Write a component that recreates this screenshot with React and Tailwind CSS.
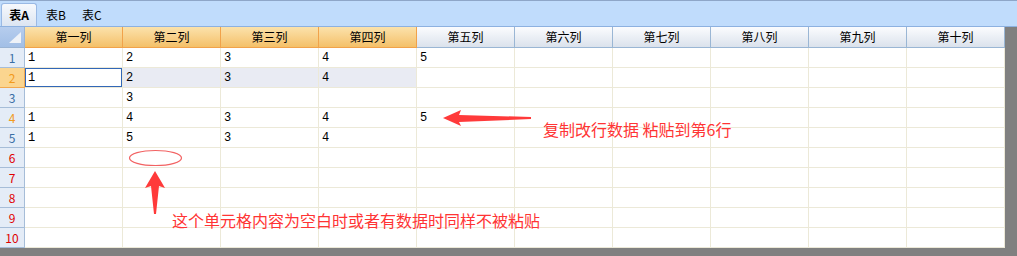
import React from "react";

const cols = ["第一列", "第二列", "第三列", "第四列", "第五列", "第六列", "第七列", "第八列", "第九列", "第十列"];

const rows = [
  ["1", "2", "3", "4", "5"],
  ["1", "2", "3", "4"],
  ["", "3"],
  ["1", "4", "3", "4", "5"],
  ["1", "5", "3", "4"],
  [],
  [],
  [],
  [],
  [],
];

const rowNumColor = (i) => {
  if (i === 1 || i === 3) return "text-[#f29a1c]";
  if (i >= 5) return "text-[#e00000]";
  return "text-[#3a6ea5]";
};

export default function App() {
  return (
    <div className="relative w-[1017px] h-[256px] overflow-hidden bg-[#808080] text-[12px] text-black" style={{ fontFamily: '"Noto Sans CJK SC", sans-serif' }}>
      {/* tab bar */}
      <div className="flex items-end h-[27px] bg-[#c0dcfc] border-t border-[#8ea6c8] border-b border-b-[#8db1e0] pl-[1px]">
        <div className="flex items-center justify-center whitespace-nowrap h-[23px] w-[36px] font-bold bg-gradient-to-b from-[#f7f9fd] to-[#dce5f2] border border-b-0 border-[#9ab9e4] rounded-t-[3px]">
          表A
        </div>
        <div className="flex items-center whitespace-nowrap h-[23px] pl-[9px] pr-[8px]">表B</div>
        <div className="flex items-center whitespace-nowrap h-[23px] px-[8px]">表C</div>
      </div>

      <div className="w-[1005px] bg-white">
        {/* header row */}
        <div className="flex h-[21px]">
          <div className="relative w-[25px] h-full bg-gradient-to-b from-[#b6cdee] to-[#a2bfe6] border-r border-b border-[#9ab4d4]">
            <svg className="absolute left-0 top-0" width="24" height="20" viewBox="0 0 24 20">
              <polygon points="9,16 21,16 21,5" fill="#eef2f8" />
            </svg>
          </div>
          {cols.map((c, i) =>
            i < 4 ? (
              <div key={c} className="flex items-center justify-center w-[98px] h-full bg-gradient-to-b from-[#fbe2ab] to-[#f4c068] border-r border-b border-[#f1a24a]">
                {c}
              </div>
            ) : (
              <div key={c} className="flex items-center justify-center w-[98px] h-full bg-gradient-to-b from-[#fbfcfe] to-[#dbe2ec] border-r border-b border-[#9ab6d4]">
                {c}
              </div>
            )
          )}
        </div>

        {/* data rows */}
        {rows.map((r, i) => (
          <div key={i} className="flex h-[20px]">
            <div
              className={
                "flex items-center justify-center w-[25px] h-full border-r border-b " +
                (i === 1 ? "bg-[#fbd58f] border-[#f2a94f] " : "bg-[#e4ecf7] border-[#a6bdd8] ") +
                rowNumColor(i)
              }
            >
              {i + 1}
            </div>
            {cols.map((c, j) => {
              const v = r[j] || "";
              const selected = i === 1 && j === 0;
              const shade = i === 1 && j > 0 && j < 4;
              return (
                <div
                  key={c}
                  className={
                    "flex items-center w-[98px] h-full border-r border-b border-[#ece9d8] " +
                    (selected ? "shadow-[inset_0_0_0_1px_#3267b7] " : "") +
                    (shade ? "bg-[#e9ebf3]" : "bg-white")
                  }
                >
                  <span className="pl-[3px]" style={{ fontFamily: '"Liberation Mono", monospace' }}>{v}</span>
                </div>
              );
            })}
          </div>
        ))}
      </div>

      {/* annotations */}
      <svg className="absolute left-0 top-0 pointer-events-none" width="1017" height="256" viewBox="0 0 1017 256">
        <ellipse cx="155.5" cy="158" rx="26" ry="7.5" fill="none" stroke="#f26262" strokeWidth="1.2" />
        <polygon points="443,118 461,110 459,115 531,117 531,119 459,122 461,126" fill="#ff3a3a" />
        <polygon points="155,171 165,188 159,186 156,214 154,214 151,186 145,188" fill="#ff3a3a" />
      </svg>
      <div className="absolute left-[543px] top-[119px] text-[16px] leading-[20px] text-[#ff3434] whitespace-nowrap">
        复制改行数据 粘贴到第6行
      </div>
      <div className="absolute left-[172px] top-[210px] text-[16px] leading-[20px] text-[#ff3434] whitespace-nowrap">
        这个单元格内容为空白时或者有数据时同样不被粘贴
      </div>
    </div>
  );
}
